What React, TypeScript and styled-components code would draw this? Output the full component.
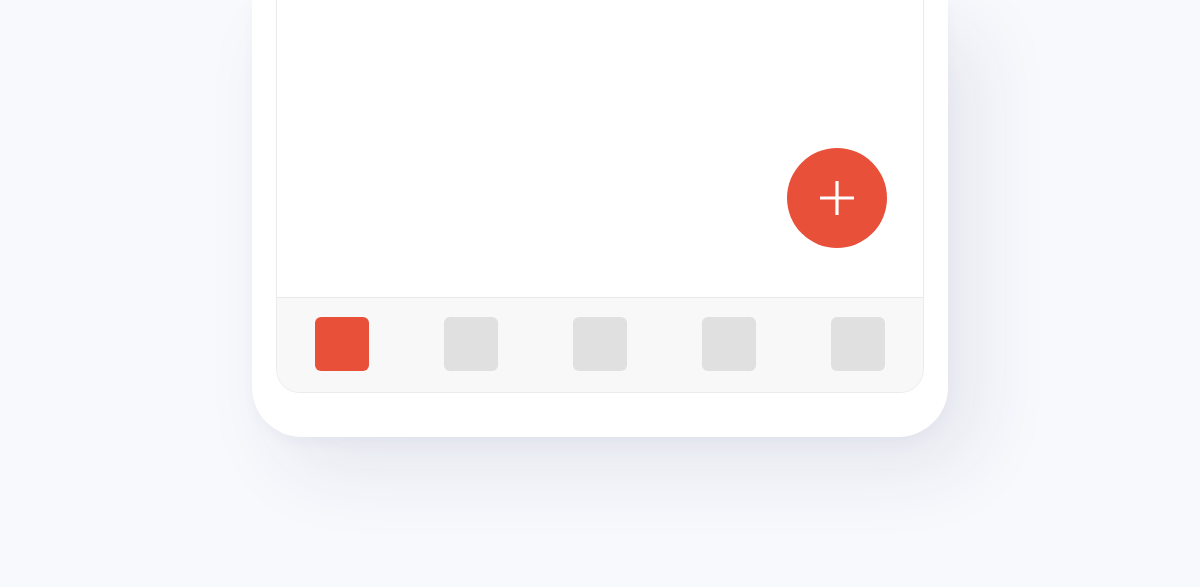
import styled, { createGlobalStyle } from 'styled-components'

const Global = createGlobalStyle`
  html, body { margin:0; padding:0; background:#f8f9fd; font-family:"Liberation Sans", Arial, sans-serif; }
  #root { min-height:100vh; }
`

const Page = styled.div`
  height:587px; overflow:hidden; display:flex; justify-content:center; align-items:flex-start;
`
const Frame = styled.div`
  width:696px; box-sizing:border-box; padding:0 24px 44px;
  background:#fff; border-radius:0 0 50px 50px;
  box-shadow: 28px 32px 80px rgba(30,40,90,0.09), 0 6px 14px rgba(30,40,90,0.03);
`
const Screen = styled.div`
  height:393px; box-sizing:border-box; display:flex; flex-direction:column;
  border:1px solid #ebebeb; border-top:none; border-radius:0 0 24px 24px; overflow:hidden;
`
const Content = styled.div`
  flex:1; display:flex; justify-content:flex-end; align-items:flex-end;
  padding:0 36px 49px 0; background:#fff;
`
const Fab = styled.button`
  width:100px; height:100px; border-radius:50%; border:none; padding:0;
  background:#e8503a; display:flex; align-items:center; justify-content:center; cursor:pointer;
`
const Nav = styled.div`
  height:95px; box-sizing:border-box; display:flex; align-items:center; padding-bottom:2px;
  background:#f8f8f8; border-top:1px solid #e9e9e9;
`
const NavSlot = styled.div`flex:1; display:flex; justify-content:center;`
const NavIcon = styled.div<{ active?: boolean }>`
  width:54px; height:54px; border-radius:6px;
  background:${p => (p.active ? '#e8503a' : '#e0e0e0')};
`

export default function App() {
  const tabs = [0, 1, 2, 3, 4]
  return (
    <>
      <Global />
      <Page>
        <Frame>
          <Screen>
            <Content>
              <Fab aria-label="add">
                <svg width="38" height="38" viewBox="0 0 38 38">
                  <path d="M19 2v34M2 19h34" stroke="#fff" strokeWidth="3.2" />
                </svg>
              </Fab>
            </Content>
            <Nav>
              {tabs.map(t => (
                <NavSlot key={t}>
                  <NavIcon active={t === 0} />
                </NavSlot>
              ))}
            </Nav>
          </Screen>
        </Frame>
      </Page>
    </>
  )
}
